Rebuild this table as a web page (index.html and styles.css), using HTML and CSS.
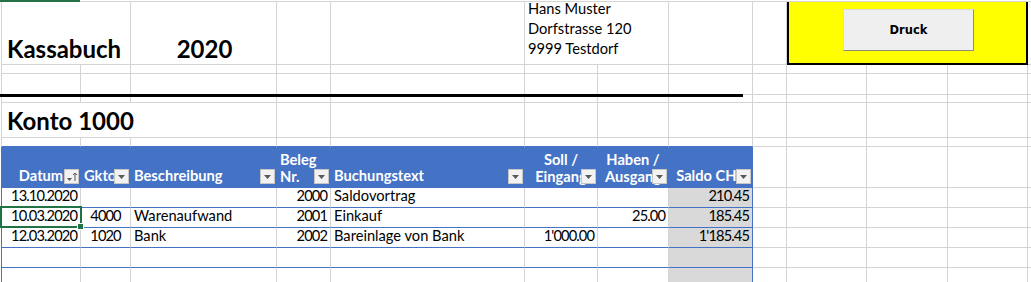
FILE: index.html
```html
<!DOCTYPE html>
<html lang="de">
<head>
    <meta charset="UTF-8">
    <meta name="viewport" content="width=device-width, initial-scale=1.0">
    <title>Kassabuch 2020</title>
    <link rel="stylesheet" href="styles.css">
</head>
<body>
    <div class="colbar"><span class="colbar-sel"></span><span class="colbar-rest"></span></div>

    <div class="sheet">
        <!-- row 1: title, year, address, print button -->
        <div class="c span2 title">Kassabuch</div>
        <div class="c title mid">2020</div>
        <div class="c"></div>
        <div class="c"></div>
        <div class="c span2 address"><div>Hans Muster<br>Dorfstrasse 120<br>9999 Testdorf</div></div>
        <div class="c"></div>
        <div class="c"></div>
        <div class="c span3 print-area"><button class="print">Druck</button></div>
        <div class="c"></div>

        <!-- row 2 -->
        <div class="c"></div><div class="c"></div><div class="c"></div><div class="c"></div>
        <div class="c"></div><div class="c"></div><div class="c"></div><div class="c"></div>
        <div class="c"></div><div class="c"></div><div class="c"></div><div class="c"></div>
        <div class="c"></div>

        <!-- row 3 -->
        <div class="c"></div><div class="c"></div><div class="c"></div><div class="c"></div>
        <div class="c"></div><div class="c"></div><div class="c"></div><div class="c"></div>
        <div class="c"></div><div class="c"></div><div class="c"></div><div class="c"></div>
        <div class="c"></div>

        <!-- row 4 -->
        <div class="c"></div><div class="c"></div><div class="c"></div><div class="c"></div>
        <div class="c"></div><div class="c"></div><div class="c"></div><div class="c"></div>
        <div class="c"></div><div class="c"></div><div class="c"></div><div class="c"></div>
        <div class="c"></div>

        <!-- row 5: account -->
        <div class="c span3 account">Konto 1000</div>
        <div class="c"></div><div class="c"></div><div class="c"></div><div class="c"></div>
        <div class="c"></div><div class="c"></div><div class="c"></div><div class="c"></div>
        <div class="c"></div><div class="c"></div>

        <!-- row 6 -->
        <div class="c above"></div><div class="c above"></div><div class="c above"></div><div class="c above"></div>
        <div class="c above"></div><div class="c above"></div><div class="c above"></div><div class="c above"></div>
        <div class="c"></div><div class="c"></div><div class="c"></div><div class="c"></div>
        <div class="c"></div>

        <!-- row 7: table header -->
        <div class="c th first mid">Datum
            <span class="filter"><svg width="13" height="13" viewBox="0 0 13 13"><path d="M2 8h5l-2.5 3z" fill="#595959"/><path d="M10 11V3M8 5l2-2 2 2" stroke="#595959" stroke-width="1" fill="none"/></svg></span>
        </div>
        <div class="c th">Gkto
            <span class="filter"><svg width="13" height="13" viewBox="0 0 13 13"><path d="M3 5h7l-3.5 4z" fill="#595959"/></svg></span>
        </div>
        <div class="c th">Beschreibung
            <span class="filter"><svg width="13" height="13" viewBox="0 0 13 13"><path d="M3 5h7l-3.5 4z" fill="#595959"/></svg></span>
        </div>
        <div class="c th wrap">Beleg<br>Nr.
            <span class="filter"><svg width="13" height="13" viewBox="0 0 13 13"><path d="M3 5h7l-3.5 4z" fill="#595959"/></svg></span>
        </div>
        <div class="c th">Buchungstext
            <span class="filter"><svg width="13" height="13" viewBox="0 0 13 13"><path d="M3 5h7l-3.5 4z" fill="#595959"/></svg></span>
        </div>
        <div class="c th wrap mid">Soll /<br>Eingang
            <span class="filter"><svg width="13" height="13" viewBox="0 0 13 13"><path d="M3 5h7l-3.5 4z" fill="#595959"/></svg></span>
        </div>
        <div class="c th wrap mid">Haben /<br>Ausgang
            <span class="filter"><svg width="13" height="13" viewBox="0 0 13 13"><path d="M3 5h7l-3.5 4z" fill="#595959"/></svg></span>
        </div>
        <div class="c th last mid">Saldo CHF
            <span class="filter"><svg width="13" height="13" viewBox="0 0 13 13"><path d="M3 5h7l-3.5 4z" fill="#595959"/></svg></span>
        </div>
        <div class="c"></div><div class="c"></div><div class="c"></div><div class="c"></div>
        <div class="c"></div>

        <!-- row 8 -->
        <div class="c td first num">13.10.2020</div>
        <div class="c td mid"></div>
        <div class="c td"></div>
        <div class="c td num">2000</div>
        <div class="c td">Saldovortrag</div>
        <div class="c td num"></div>
        <div class="c td num"></div>
        <div class="c td saldo num">210.45</div>
        <div class="c"></div><div class="c"></div><div class="c"></div><div class="c"></div>
        <div class="c"></div>

        <!-- row 9 -->
        <div class="c td first num active">10.03.2020<span class="sel"></span></div>
        <div class="c td mid">4000</div>
        <div class="c td">Warenaufwand</div>
        <div class="c td num">2001</div>
        <div class="c td">Einkauf</div>
        <div class="c td num"></div>
        <div class="c td num">25.00</div>
        <div class="c td saldo num">185.45</div>
        <div class="c"></div><div class="c"></div><div class="c"></div><div class="c"></div>
        <div class="c"></div>

        <!-- row 10 -->
        <div class="c td first num">12.03.2020</div>
        <div class="c td mid">1020</div>
        <div class="c td">Bank</div>
        <div class="c td num">2002</div>
        <div class="c td">Bareinlage von Bank</div>
        <div class="c td num">1'000.00</div>
        <div class="c td num"></div>
        <div class="c td saldo num">1'185.45</div>
        <div class="c"></div><div class="c"></div><div class="c"></div><div class="c"></div>
        <div class="c"></div>

        <!-- rows 11-12: empty table rows -->
        <div class="c td first"></div><div class="c td"></div><div class="c td"></div><div class="c td"></div>
        <div class="c td"></div><div class="c td"></div><div class="c td"></div><div class="c td saldo"></div>
        <div class="c"></div><div class="c"></div><div class="c"></div><div class="c"></div>
        <div class="c"></div>

        <div class="c td first"></div><div class="c td"></div><div class="c td"></div><div class="c td"></div>
        <div class="c td"></div><div class="c td"></div><div class="c td"></div><div class="c td saldo"></div>
        <div class="c"></div><div class="c"></div><div class="c"></div><div class="c"></div>
        <div class="c"></div>
    </div>

    <!-- drawn line under the heading block -->
    <div class="rule"></div>
</body>
</html>
```

FILE: styles.css
```css
body {
    margin: 0;
    font-family: Lato, "Liberation Sans", sans-serif;
    font-size: 14.67px;
    color: #000;
    background: #fff;
    position: relative;
    overflow: hidden;
}

/* column header strip, column A selected */
.colbar { height: 2px; display: flex; }
.colbar-sel { width: 80px; background: #217346; }
.colbar-rest { flex: 1; border-bottom: 1px solid #d4d4d4; }

.sheet {
    display: grid;
    grid-template-columns: 79px 50px 146px 54px 194px 73px 71px 84px 34px 80px 81px 80px 1fr;
    grid-template-rows: 63px 9px 21px 8px 35px 9px 41px repeat(5, 20px);
    margin-left: 1px;
    border-left: 1px solid #d4d4d4;
}

.c {
    box-sizing: border-box;
    min-width: 0;
    display: flex;
    align-items: flex-end;
    padding: 0 3px 2px 3px;
    border-right: 1px solid #d4d4d4;
    border-bottom: 1px solid #d4d4d4;
    white-space: nowrap;
    overflow: hidden;
    line-height: 18px;
}
.span2 { grid-column: span 2; }
.span3 { grid-column: span 3; }
.num { justify-content: flex-end; }
.mid { justify-content: center; text-align: center; }

.title { font-size: 24px; font-weight: bold; padding-bottom: 0; line-height: 30px; padding-left: 5px; }
.account { font-size: 24px; font-weight: bold; padding-left: 5px; padding-bottom: 2px; line-height: 28px; }
.address { align-items: flex-start; line-height: 20px; padding-top: 0; overflow: visible; }
.address div { margin-top: -3px; }

.print-area {
    background: #ffff00;
    border: 2px solid #000;
    border-top: none;
    align-items: flex-start;
    padding: 7px 0 0 54px;
    overflow: visible;
}
.print {
    width: 131px;
    height: 42px;
    background: #efefef;
    border: 1px solid;
    border-color: #dcdcdc #8e8e7e #8e8e7e #dcdcdc;
    font-family: "DejaVu Sans", sans-serif;
    font-size: 11.5px;
    font-weight: bold;
    color: #000;
}

/* table */
.above { border-bottom-color: #4472c4; }
.th {
    position: relative;
    background: #4472c4;
    color: #fff;
    font-weight: bold;
    border-right-color: #4472c4;
    border-bottom-color: #4472c4;
    padding-bottom: 2px;
}
.th.wrap { line-height: 17px; }
.td { border-bottom-color: #4472c4; }
.td.num, .td.mid { letter-spacing: -0.9px; }
.first { box-shadow: -1px 0 0 #4472c4; }
.saldo { background: #d9d9d9; border-right-color: #4472c4; }
.th.last { border-right-color: #4472c4; }

.filter {
    position: absolute;
    right: 1px;
    bottom: 3px;
    width: 15px;
    height: 15px;
    box-sizing: border-box;
    background: #f2f2f2;
    border: 1px solid #c6c6c6;
    display: flex;
    align-items: center;
    justify-content: center;
}
.filter svg { display: block; }

/* active cell */
.active { position: relative; overflow: visible; }
.sel {
    position: absolute;
    left: -2px;
    top: -2px;
    right: -2px;
    bottom: -1px;
    border: 2px solid #217346;
    z-index: 2;
}
.sel::after {
    content: "";
    position: absolute;
    right: -4px;
    bottom: -4px;
    width: 5px;
    height: 5px;
    background: #217346;
    border: 1px solid #fff;
}

.rule {
    position: absolute;
    left: 0;
    top: 94px;
    width: 743px;
    height: 3px;
    background: #000;
}
```
